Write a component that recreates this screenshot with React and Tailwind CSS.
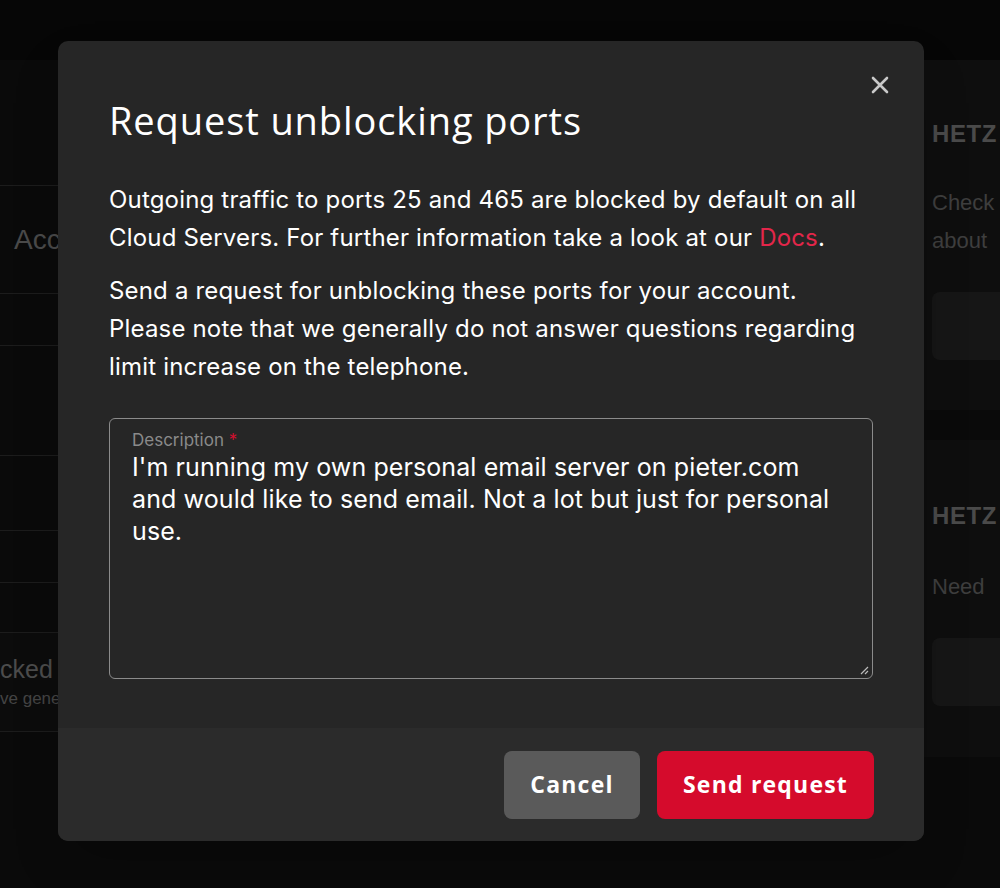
import React from "react";

export default function App() {
  return (
    <div className="relative w-[1000px] h-[888px] overflow-hidden bg-[#0a0a0a]" style={{ fontFamily: "Inter, 'Liberation Sans', sans-serif" }}>
      {/* background page */}
      <div className="h-[60px] bg-[#060606]" />
      <div className="flex" style={{ fontFamily: "'Liberation Sans', Arial, sans-serif" }}>
        <div className="flex-1 flex flex-col">
          <div className="h-[125px]" />
          <div className="h-[108px] border-t border-[#1c1c1c] flex items-center pl-[14px] text-[28px] text-[#4a4a4a]">Account</div>
          <div className="h-[52px] border-t border-[#1c1c1c]" />
          <div className="h-[110px] border-t border-[#1c1c1c]" />
          <div className="h-[75px] border-t border-[#1c1c1c]" />
          <div className="h-[52px] border-t border-[#1c1c1c]" />
          <div className="h-[50px] border-t border-[#1c1c1c]" />
          <div className="h-[100px] border-t border-[#1c1c1c] border-b pt-[22px] bg-[#0c0c0c]">
            <div className="text-[25px] text-[#4c4c4c] leading-[28px] whitespace-nowrap">cked Ports</div>
            <div className="text-[17px] text-[#444] leading-[26px] mt-[3px] whitespace-nowrap">ve generally</div>
          </div>
        </div>
        <div className="w-[76px] flex flex-col">
          <div className="h-[350px] bg-[#0e0e0e] pl-[8px] pt-[56px]">
            <div className="text-[24px] font-bold text-[#4a4a4a] tracking-wide">HETZ</div>
            <div className="text-[22px] text-[#3e3e3e] leading-[38px] mt-[32px] whitespace-nowrap">Check<br />about</div>
            <div className="mt-[32px] h-[68px] w-[68px] rounded-l-[8px] bg-[#161616]" />
          </div>
          <div className="h-[30px]" />
          <div className="h-[317px] bg-[#0e0e0e] pl-[8px] pt-[58px]">
            <div className="text-[24px] font-bold text-[#4a4a4a] tracking-wide">HETZ</div>
            <div className="text-[22px] text-[#3e3e3e] leading-[38px] mt-[34px] whitespace-nowrap">Need</div>
            <div className="mt-[32px] h-[68px] w-[68px] rounded-l-[8px] bg-[#161616]" />
          </div>
        </div>
      </div>

      {/* modal */}
      <div className="absolute left-[58px] top-[41px] w-[866px] h-[800px] rounded-[10px] bg-[#262626] overflow-hidden flex flex-col shadow-2xl">
        <button className="absolute right-[34px] top-[34px] text-[#c8c8c8]">
          <svg width="20" height="20" viewBox="0 0 20 20"><path d="M3 3 L17 17 M17 3 L3 17" stroke="currentColor" strokeWidth="2.6" strokeLinecap="round" /></svg>
        </button>
        <div className="flex-1 px-[51px] pt-[55px]">
          <h2 className="text-[38px] leading-[48px] text-white tracking-[0.9px]" style={{ fontFamily: "'Open Sans', 'Noto Sans', sans-serif" }}>Request unblocking ports</h2>
          <p className="mt-[37px] text-[24px] leading-[38px] text-white tracking-[0.18px]">
            Outgoing traffic to ports 25 and 465 are blocked by default on all Cloud Servers. For further information take a look at our <span className="text-[#e3264a]">Docs</span>.
          </p>
          <p className="mt-[15px] text-[24px] leading-[38px] text-white tracking-[0.18px]">
            Send a request for unblocking these ports for your account. Please note that we generally do not answer questions regarding limit increase on the telephone.
          </p>
          <div className="relative mt-[32px] h-[261px] rounded-[6px] border border-[#8b8b8b] pl-[22px] pr-[30px] pt-[10px]">
            <div className="text-[17px] leading-[22px] text-[#8a8a8a]">Description <span className="text-[#d0102f]">*</span></div>
            <div className="text-[25px] leading-[32px] text-white tracking-[0.1px]">
              I'm running my own personal email server on pieter.com and would like to send email. Not a lot but just for personal use.
            </div>
            <svg className="absolute right-[2px] bottom-[2px]" width="12" height="12" viewBox="0 0 12 12"><path d="M10 3 L3 10 M10 7 L7 10" stroke="#bbb" strokeWidth="1.2" /></svg>
          </div>
        </div>
        <div className="h-[113px] bg-[#2b2b2b] flex items-center justify-end gap-[17px] pr-[50px]" style={{ fontFamily: "'Open Sans', 'Noto Sans', sans-serif" }}>
          <button className="h-[68px] w-[136px] rounded-[8px] bg-[#5a5a5a] text-white text-[23px] font-bold tracking-[1.2px]">Cancel</button>
          <button className="h-[68px] w-[217px] rounded-[8px] bg-[#d50b2c] text-white text-[23px] font-bold tracking-[1.2px]">Send request</button>
        </div>
      </div>
    </div>
  );
}
